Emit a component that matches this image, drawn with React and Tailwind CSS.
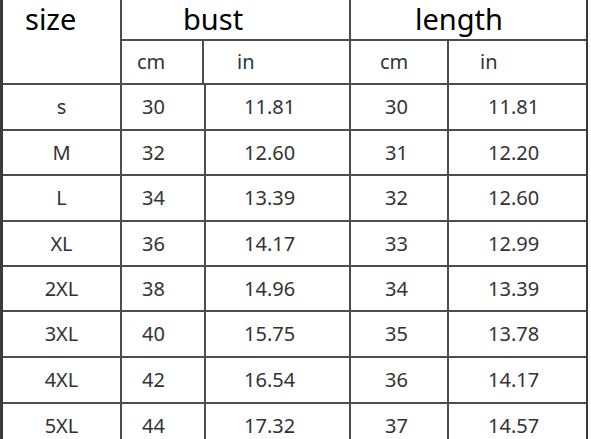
import React from "react";

const rows = [
  { size: "s", bcm: "30", bin: "11.81", lcm: "30", lin: "11.81", h: "h-[46px]" },
  { size: "M", bcm: "32", bin: "12.60", lcm: "31", lin: "12.20", h: "h-[45px]" },
  { size: "L", bcm: "34", bin: "13.39", lcm: "32", lin: "12.60", h: "h-[46px]" },
  { size: "XL", bcm: "36", bin: "14.17", lcm: "33", lin: "12.99", h: "h-[45px]" },
  { size: "2XL", bcm: "38", bin: "14.96", lcm: "34", lin: "13.39", h: "h-[45px]" },
  { size: "3XL", bcm: "40", bin: "15.75", lcm: "35", lin: "13.78", h: "h-[46px]" },
  { size: "4XL", bcm: "42", bin: "16.54", lcm: "36", lin: "14.17", h: "h-[46px]" },
  { size: "5XL", bcm: "44", bin: "17.32", lcm: "37", lin: "14.57", h: "h-[46px]" },
];

const App = () => {
  return (
    <div className="w-[591px] h-[439px] overflow-hidden bg-white font-['Noto_Sans',sans-serif]">
      <div className="w-[588px] border-l-[3px] border-r-2 border-[#3a3a3a]">
        {/* Header */}
        <div className="flex h-[85px] border-b-2 border-[#4d4d4d]">
          <div className="w-[119px] border-r-2 border-[#4d4d4d] pl-[22px] pt-[4px] text-[29px] leading-none text-black">
            size
          </div>
          <div className="w-[229px] border-r-2 border-[#4d4d4d] flex flex-col">
            <div className="h-[41px] border-b-2 border-[#4d4d4d] pl-[61px] pt-[4px] text-[29px] leading-none text-black">
              bust
            </div>
            <div className="flex flex-1 text-[20px] text-[#333]">
              <div className="w-[82px] border-r-2 border-[#4d4d4d] pl-[15px] flex items-center">cm</div>
              <div className="flex-1 pl-[33px] flex items-center">in</div>
            </div>
          </div>
          <div className="flex-1 flex flex-col">
            <div className="h-[41px] border-b-2 border-[#4d4d4d] pl-[64px] pt-[4px] text-[29px] leading-none text-black">
              length
            </div>
            <div className="flex flex-1 text-[20px] text-[#333]">
              <div className="w-[98px] border-r-2 border-[#4d4d4d] pl-[29px] flex items-center">cm</div>
              <div className="flex-1 pl-[31px] flex items-center">in</div>
            </div>
          </div>
        </div>

        {/* Rows */}
        {rows.map((r) => (
          <div key={r.size} className={`flex ${r.h} border-b-2 border-[#4d4d4d] text-[20px] text-[#333]`}>
            <div className="w-[119px] border-r-2 border-[#4d4d4d] flex items-center justify-center">{r.size}</div>
            <div className="w-[84px] border-r-2 border-[#4d4d4d] pl-[20px] flex items-center">{r.bcm}</div>
            <div className="w-[145px] border-r-2 border-[#4d4d4d] pl-[38px] flex items-center">{r.bin}</div>
            <div className="w-[98px] border-r-2 border-[#4d4d4d] pl-[34px] flex items-center">{r.lcm}</div>
            <div className="flex-1 pl-[39px] flex items-center">{r.lin}</div>
          </div>
        ))}
      </div>
    </div>
  );
};

export default App;
